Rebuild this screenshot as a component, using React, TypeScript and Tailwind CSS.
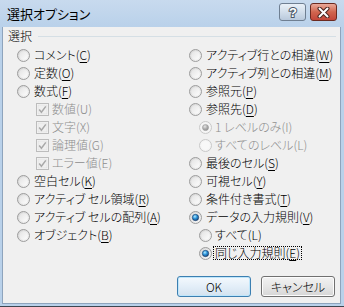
import React from "react";

type RadioProps = { checked?: boolean; disabled?: boolean };

function Radio({ checked, disabled }: RadioProps) {
  return (
    <svg width="13" height="13" viewBox="0 0 13 13" className="shrink-0">
      <defs>
        <linearGradient id="rn-o" x1="0" y1="0" x2="1" y2="1">
          <stop offset="0" stopColor="#d2d2d2" />
          <stop offset="1" stopColor="#f7f7f7" />
        </linearGradient>
        <linearGradient id="rn-i" x1="0" y1="0" x2="1" y2="1">
          <stop offset="0" stopColor="#e4e4e4" />
          <stop offset="1" stopColor="#fdfdfd" />
        </linearGradient>
        <radialGradient id="rn-dot" cx="0.4" cy="0.35" r="0.7">
          <stop offset="0" stopColor="#b8ecff" />
          <stop offset="0.45" stopColor="#2d96dc" />
          <stop offset="1" stopColor="#173f74" />
        </radialGradient>
        <radialGradient id="rd-dot" cx="0.4" cy="0.35" r="0.7">
          <stop offset="0" stopColor="#e6e6e6" />
          <stop offset="0.5" stopColor="#b0b0b0" />
          <stop offset="1" stopColor="#8a8a8a" />
        </radialGradient>
      </defs>
      {disabled ? (
        <>
          <circle cx="6.5" cy="6.5" r="6" fill="#f4f4f4" stroke="#c8c8c8" strokeWidth="1" />
          <circle cx="6.5" cy="6.5" r="4.2" fill="#f8f8f8" />
          {checked && <circle cx="6.5" cy="6.5" r="3.1" fill="url(#rd-dot)" stroke="#9a9a9a" strokeWidth="0.5" />}
        </>
      ) : (
        <>
          <circle cx="6.5" cy="6.5" r="6" fill="url(#rn-o)" stroke="#9d9d9d" strokeWidth="1" />
          <circle cx="6.5" cy="6.5" r="4.2" fill="url(#rn-i)" />
          {checked && <circle cx="6.5" cy="6.5" r="3.2" fill="url(#rn-dot)" stroke="#173a66" strokeWidth="0.6" />}
        </>
      )}
    </svg>
  );
}

function DisabledCheck() {
  return (
    <svg width="13" height="13" viewBox="0 0 13 13" className="shrink-0">
      <rect x="0.5" y="0.5" width="12" height="12" fill="#f6f6f6" stroke="#bcbcbc" />
      <rect x="2" y="2" width="9" height="9" fill="#efefef" stroke="#dcdcdc" strokeWidth="0.6" />
      <path d="M3.2 6.6 L5.4 9.2 L9.8 3.4" fill="none" stroke="#a8a8a8" strokeWidth="1.5" />
    </svg>
  );
}

function Label({ text, k, disabled, ul = true }: { text: string; k: string; disabled?: boolean; ul?: boolean }) {
  return (
    <span className={disabled ? "text-[#8d8d8d] whitespace-nowrap" : "text-black whitespace-nowrap"}>
      {text}(
      {ul && !disabled ? <span className="underline underline-offset-[2px] decoration-1">{k}</span> : k})
    </span>
  );
}

type Row =
  | { kind: "radio"; text: string; k: string; checked?: boolean; indent?: boolean; disabled?: boolean; focus?: boolean; ul?: boolean }
  | { kind: "check"; text: string; k: string };

const left: Row[] = [
  { kind: "radio", text: "コメント", k: "C" },
  { kind: "radio", text: "定数", k: "O" },
  { kind: "radio", text: "数式", k: "F" },
  { kind: "check", text: "数値", k: "U" },
  { kind: "check", text: "文字", k: "X" },
  { kind: "check", text: "論理値", k: "G" },
  { kind: "check", text: "エラー値", k: "E" },
  { kind: "radio", text: "空白セル", k: "K" },
  { kind: "radio", text: "アクティブ セル領域", k: "R" },
  { kind: "radio", text: "アクティブ セルの配列", k: "A" },
  { kind: "radio", text: "オブジェクト", k: "B" },
];

const right: Row[] = [
  { kind: "radio", text: "アクティブ行との相違", k: "W" },
  { kind: "radio", text: "アクティブ列との相違", k: "M" },
  { kind: "radio", text: "参照元", k: "P" },
  { kind: "radio", text: "参照先", k: "D" },
  { kind: "radio", text: "1 レベルのみ", k: "I", indent: true, disabled: true, checked: true },
  { kind: "radio", text: "すべてのレベル", k: "L", indent: true, disabled: true },
  { kind: "radio", text: "最後のセル", k: "S" },
  { kind: "radio", text: "可視セル", k: "Y" },
  { kind: "radio", text: "条件付き書式", k: "T" },
  { kind: "radio", text: "データの入力規則", k: "V", checked: true },
  { kind: "radio", text: "すべて", k: "L", indent: true, ul: false },
  { kind: "radio", text: "同じ入力規則", k: "E", indent: true, checked: true, focus: true },
];

function RowView({ r }: { r: Row }) {
  if (r.kind === "check") {
    return (
      <div className="h-[18px] flex items-center pl-[19px] gap-[3px]">
        <DisabledCheck />
        <Label text={r.text} k={r.k} disabled />
      </div>
    );
  }
  return (
    <div className={`h-[18px] flex items-center ${r.indent ? "pl-[10px]" : ""} ${r.focus ? "gap-[1px]" : r.indent ? "gap-[3px]" : "gap-[4px]"}`}>
      <Radio checked={r.checked} disabled={r.disabled} />
      {r.focus ? (
        <span className="h-[14px] flex items-center px-[1px] border border-dotted border-black">
          <Label text={r.text} k={r.k} />
        </span>
      ) : (
        <Label text={r.text} k={r.k} disabled={r.disabled} ul={r.ul} />
      )}
    </div>
  );
}

export default function App() {
  return (
    <div className="w-[344px] h-[307px] flex flex-col bg-[#b9d1ea] border-b border-[#3d4650] overflow-hidden font-['Noto_Sans_CJK_JP','Noto_Sans',sans-serif] font-light [font-feature-settings:'palt'] text-[12px] leading-[18px] text-black select-none">
      {/* title bar */}
      <div className="h-[27px] shrink-0 flex items-start pl-[7px] pr-[7px] bg-gradient-to-b from-[#c8daee] to-[#b9d1ea]">
        <span className="text-[13px] leading-[27px] text-black font-normal">選択オプション</span>
        <div className="ml-auto mt-[3px] flex gap-[4px]">
          <div className="w-[27px] h-[18px] rounded-[3px] border border-[#6f7f92] bg-gradient-to-b from-[#e9f0f8] via-[#d2deeb] to-[#b9c9dc] flex items-center justify-center">
            <svg width="12" height="13" viewBox="0 0 12 13">
              <text x="6" y="11" textAnchor="middle" fontSize="13" fontWeight="bold" fontFamily="Liberation Sans, sans-serif" fill="#ffffff" stroke="#4a5766" strokeWidth="2" paintOrder="stroke">?</text>
            </svg>
          </div>
          <div className="w-[27px] h-[18px] rounded-[3px] border border-[#6b2a20] bg-gradient-to-b from-[#e9a99a] via-[#d0654f] to-[#c3463a] flex items-center justify-center">
            <svg width="13" height="11" viewBox="0 0 13 11">
              <path d="M2.5 1.5 L10.5 9.5 M10.5 1.5 L2.5 9.5" stroke="#4b2520" strokeWidth="4" strokeLinecap="round" />
              <path d="M2.5 1.5 L10.5 9.5 M10.5 1.5 L2.5 9.5" stroke="#ffffff" strokeWidth="2" strokeLinecap="round" />
            </svg>
          </div>
        </div>
      </div>

      {/* client area */}
      <div className="flex-1 ml-[2px] mr-[3px] mb-[2px] bg-[#f0f0f0] border-l border-r border-b border-[#8ea4bd] flex flex-col">
        <div className="mt-[1px] h-[16px] flex items-center pl-[5px] pr-[4px] gap-[6px]">
          <span className="leading-[16px]">選択</span>
          <div className="flex-1 h-0 border-t border-[#d5dfe5]" />
        </div>
        <div className="mt-[2px] pl-[14px] grid grid-cols-[172px_1fr]">
          <div className="flex flex-col">
            {left.map((r, i) => (
              <RowView key={i} r={r} />
            ))}
          </div>
          <div className="flex flex-col">
            {right.map((r, i) => (
              <RowView key={i} r={r} />
            ))}
          </div>
        </div>
        <div className="mt-[14px] flex justify-end gap-[10px] pr-[5px]">
          <button className="w-[74px] h-[21px] rounded-[3px] border border-[#3c7fb1] bg-gradient-to-b from-[#f4f9fd] via-[#e3eef8] to-[#d3e2ef] shadow-[inset_0_0_0_1px_#bfe6fb] flex items-center justify-center text-[12px] leading-none text-black font-light">
            OK
          </button>
          <button className="w-[74px] h-[21px] rounded-[3px] border border-[#707070] bg-gradient-to-b from-[#f2f2f2] via-[#e6e6e6] to-[#d6d6d6] shadow-[inset_0_0_0_1px_#fcfcfc] flex items-center justify-center text-[12px] leading-none text-black font-light">
            キャンセル
          </button>
        </div>
      </div>
    </div>
  );
}
